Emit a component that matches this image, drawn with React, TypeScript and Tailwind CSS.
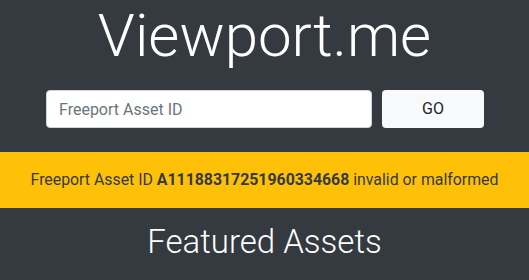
import React from "react";

const App = () => {
  return (
    <div className="min-h-[280px] bg-[#343a40] font-['Roboto',sans-serif] text-white">
      <h1 className="text-center text-[60px] font-light leading-[1.2]">Viewport.me</h1>

      <form
        className="ml-[46px] mr-[45px] mt-[18px] flex gap-[10px]"
        onSubmit={(e) => e.preventDefault()}
      >
        <input
          type="text"
          placeholder="Freeport Asset ID"
          className="h-[38px] flex-1 rounded-[4px] border border-[#ced4da] bg-white px-3 text-base text-[#495057] placeholder:text-[#6c757d] focus:outline-none"
        />
        <button
          type="submit"
          className="h-[38px] w-[102px] rounded-[4px] bg-[#f8f9fa] text-base text-[#212529]"
        >
          GO
        </button>
      </form>

      <div className="mt-[24px] bg-[#ffc107] py-4 text-center text-[15.85px] leading-6 text-[#343a40]">
        Freeport Asset ID <span className="font-bold">A11188317251960334668</span> invalid or malformed
      </div>

      <h2 className="mt-[14px] text-center text-[33px] font-light leading-[1.2]">Featured Assets</h2>
    </div>
  );
};

export default App;
